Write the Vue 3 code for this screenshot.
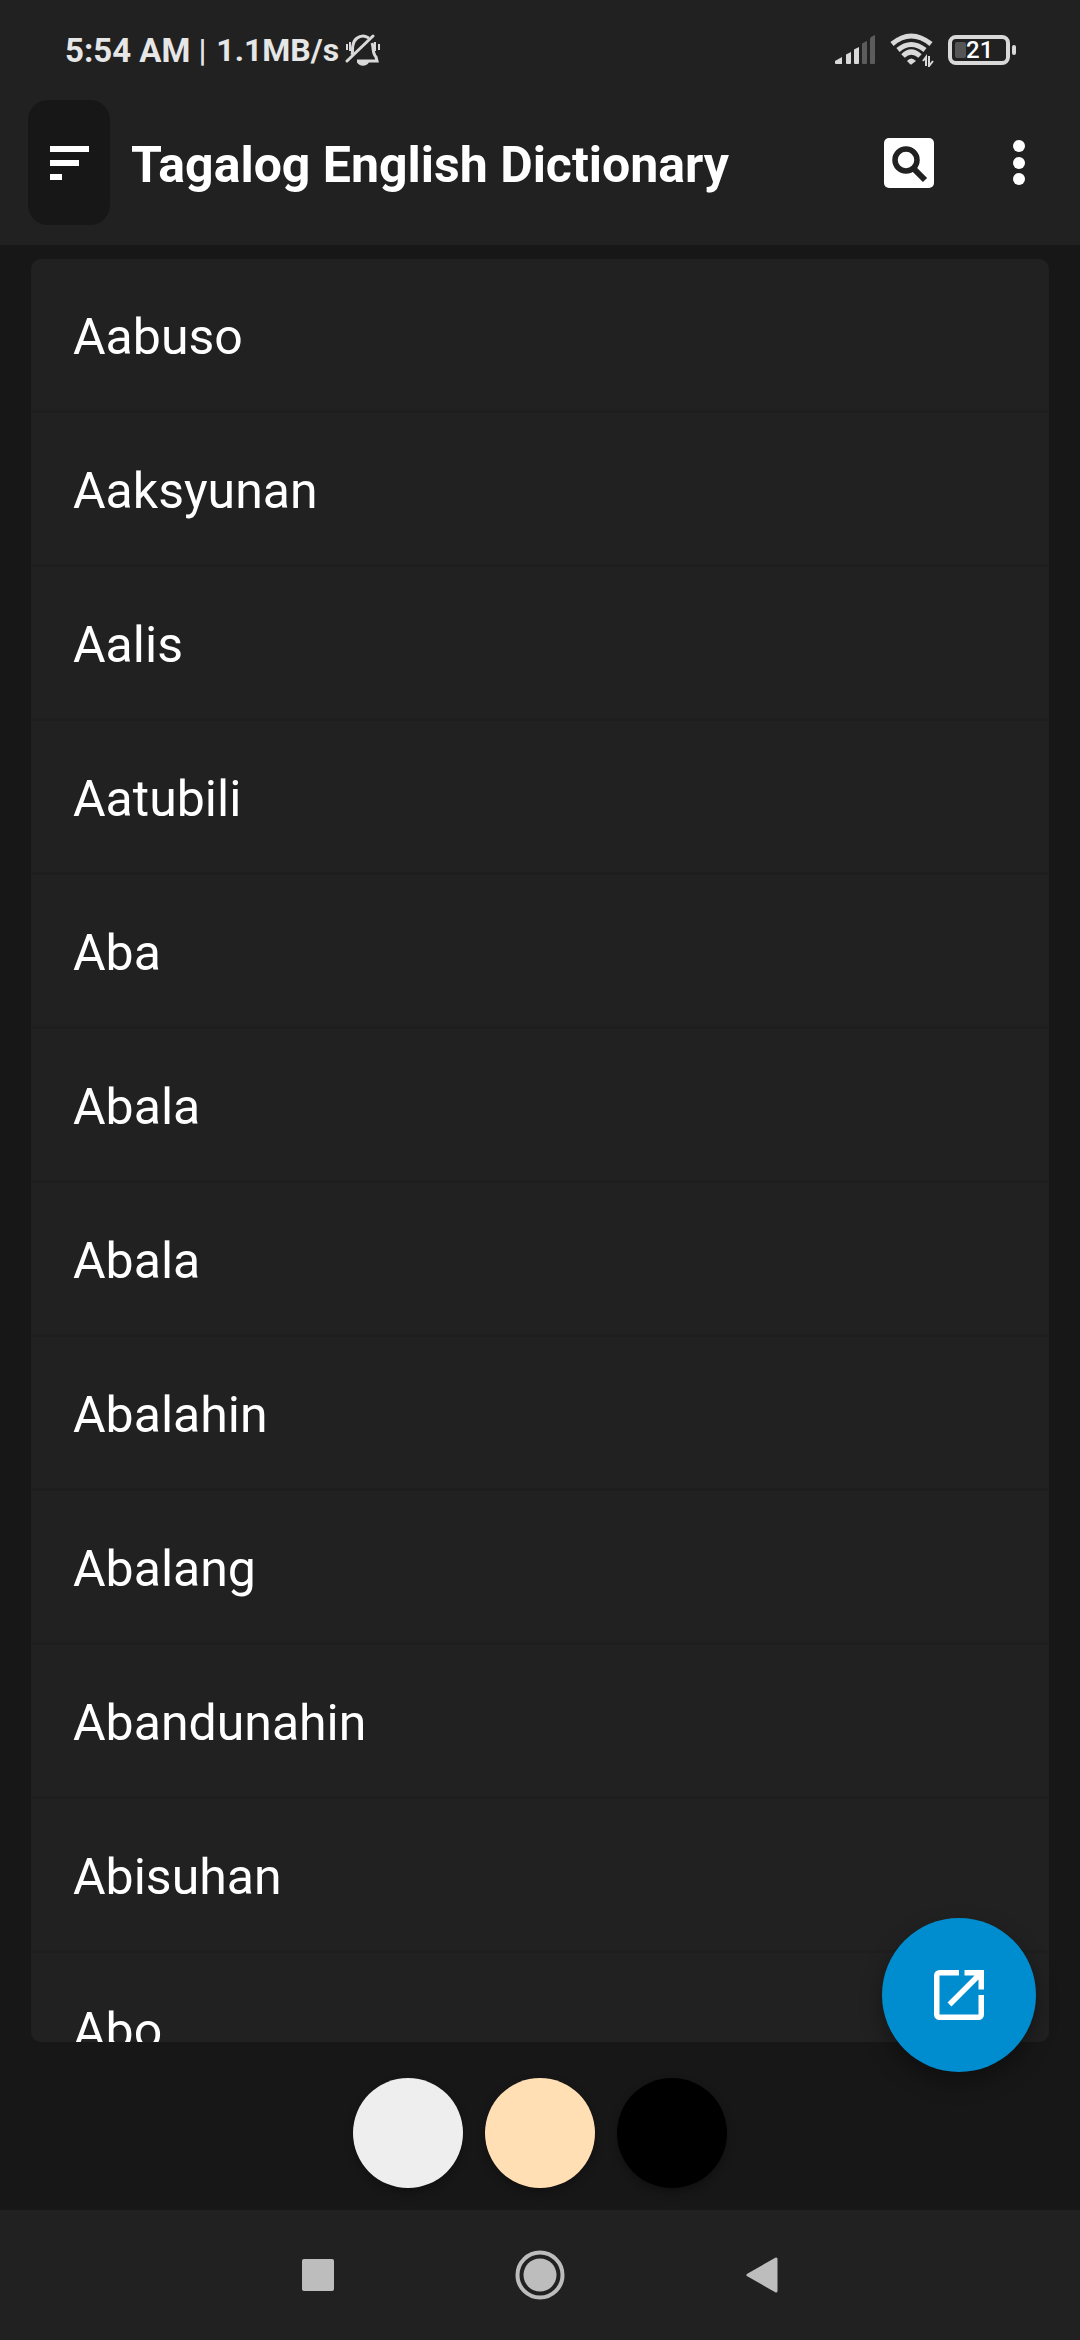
<script setup>
const words = [
  'Aabuso',
  'Aaksyunan',
  'Aalis',
  'Aatubili',
  'Aba',
  'Abala',
  'Abala',
  'Abalahin',
  'Abalang',
  'Abandunahin',
  'Abisuhan',
  'Abo',
]

const themes = [
  { id: 'light', label: 'Light theme' },
  { id: 'sepia', label: 'Sepia theme' },
  { id: 'dark', label: 'Dark theme' },
]
</script>

<template>
  <div class="screen">
    <header class="top">
      <div class="status">
        <span class="clock">5:54 AM</span>
        <span class="divider">|</span>
        <span class="speed">1.1MB/s</span>
        <svg class="bell" width="36" height="34" viewBox="0 0 36 34" fill="none" stroke="#d9d9d9" stroke-width="3">
          <path d="M7 22c1-3 0-7 1-10 1-6 6-9 10-9 2 0 4 1 6 2M27 10c2 5 0 10 4 14l1 4H12" />
          <path d="M12 29h12c-2 5-10 5-12 0z" fill="#d9d9d9" stroke="none" />
          <path d="M2 28 28 3" stroke-linecap="round" />
          <path d="M2 11v6M5 9v9M30 9v9M34 11v6" stroke-width="2" />
        </svg>
        <span class="spacer"></span>
        <svg class="signal" width="42" height="30" viewBox="0 0 42 30">
          <g fill="#d9d9d9">
            <path d="M1 26 8 22v7H2a1 1 0 0 1-1-1z" />
            <path d="M12 20q0-1 1-1l4-2v11q0 1-1 1h-3q-1 0-1-1z" />
            <path d="M20 15q0-1 1-1l4-2v16q0 1-1 1h-3q-1 0-1-1z" />
          </g>
          <g fill="#5c5c5c">
            <path d="M28 9q0-1 1-1l4-2v22q0 1-1 1h-3q-1 0-1-1z" />
            <path d="M36 4q0-1 1-2l4-2v28q0 1-1 1h-3q-1 0-1-1z" />
          </g>
        </svg>
        <svg class="wifi" width="44" height="34" viewBox="0 0 44 34" fill="none" stroke="#d9d9d9" stroke-width="5">
          <path d="M2 11Q21-5 41 11" />
          <path d="M8 17Q21 6 35 17" />
          <path d="M13 23Q21 15 30 23" />
          <path d="M17 28q4-5 9 0l-4 3q-1 1-2 0z" fill="#d9d9d9" stroke="none" />
          <path d="M36 33V24l-3 4M39 23v10l4-5" stroke-width="2" />
        </svg>
        <span class="battery"><span class="cell"><i class="charge"></i>21</span><i class="tip"></i></span>
      </div>

      <div class="toolbar">
        <button class="menu" type="button" aria-label="Menu">
          <svg width="39" height="34" viewBox="0 0 39 34" fill="#fff">
            <path d="M0 0h39v6H0zM0 14h29v6H0zM0 28h12v6H0z" />
          </svg>
        </button>
        <h1>Tagalog English Dictionary</h1>
        <button class="search" type="button" aria-label="Search">
          <svg width="50" height="50" viewBox="0 0 50 50">
            <rect width="50" height="50" rx="5" fill="#fff" />
            <g fill="none" stroke="#212121">
              <circle cx="22" cy="22" r="11" stroke-width="5.5" />
              <path d="m29 30 12 12" stroke-width="6" />
            </g>
          </svg>
        </button>
        <button class="more" type="button" aria-label="More options">
          <svg width="12" height="46" viewBox="0 0 12 46" fill="#fff">
            <circle cx="6" cy="6" r="6" />
            <circle cx="6" cy="23" r="6" />
            <circle cx="6" cy="39" r="6" />
          </svg>
        </button>
      </div>
    </header>

    <main>
      <ul class="words">
        <li v-for="(word, i) in words" :key="i"><a href="#">{{ word }}</a></li>
      </ul>

      <div class="themes">
        <button v-for="t in themes" :key="t.id" type="button" :class="['swatch', t.id]" :aria-label="t.label"></button>
      </div>

      <button class="open" type="button" aria-label="Open">
        <svg width="50" height="50" viewBox="0 0 50 50" fill="none" stroke="#fff" stroke-width="5.5">
          <path d="M25 2.75H5.5a2.75 2.75 0 0 0-2.75 2.75v39a2.75 2.75 0 0 0 2.75 2.75h39a2.75 2.75 0 0 0 2.75-2.75V25" />
          <path d="M30.5 2.75h16.75V19.5M47 3 15.5 34.5" />
        </svg>
      </button>
    </main>

    <nav class="system">
      <button type="button" aria-label="Recent apps">
        <svg width="32" height="32" viewBox="0 0 32 32"><rect width="32" height="32" rx="2" fill="#bdbdbd" /></svg>
      </button>
      <button type="button" aria-label="Home">
        <svg width="50" height="50" viewBox="0 0 50 50">
          <circle cx="25" cy="25" r="22.5" fill="none" stroke="#bdbdbd" stroke-width="4" />
          <circle cx="25" cy="25" r="16.5" fill="#bdbdbd" />
        </svg>
      </button>
      <button type="button" aria-label="Back">
        <svg width="32" height="36" viewBox="0 0 32 36">
          <path d="M2 18 30 2v32z" fill="#bdbdbd" stroke="#bdbdbd" stroke-width="3" stroke-linejoin="round" />
        </svg>
      </button>
    </nav>
  </div>
</template>

<style>
body {
  background: #171717;
}
</style>

<style scoped>
* {
  box-sizing: border-box;
}

.screen {
  display: flex;
  flex-direction: column;
  height: 100vh;
  background: #171717;
  color: #fff;
  font-family: Roboto, "Noto Sans", sans-serif;
}

button {
  display: flex;
  align-items: center;
  justify-content: center;
  padding: 0;
  border: 0;
  background: none;
  cursor: pointer;
}

svg {
  display: block;
  flex: none;
}

.top {
  flex: none;
  padding-bottom: 20px;
  background: #212121;
}

.status {
  display: flex;
  align-items: center;
  height: 100px;
  padding: 0 64px 0 65px;
  color: #e6e6e6;
  font-size: 33px;
  font-weight: 700;
}

.divider {
  margin: 0 10px 0 8px;
  font-size: 32px;
  font-weight: 500;
}

.speed {
  font-size: 32px;
}

.bell {
  margin-left: 6px;
}

.spacer {
  flex: 1;
}

.wifi {
  margin-left: 14px;
}

.battery {
  display: flex;
  align-items: center;
  gap: 2px;
  margin-left: 14px;
}

.cell {
  display: flex;
  align-items: center;
  width: 62px;
  height: 30px;
  padding-left: 3px;
  border: 4px solid #d9d9d9;
  border-radius: 8px;
  color: #fff;
  font-size: 24px;
  font-weight: 500;
}

.charge {
  width: 11px;
  height: 16px;
  border-radius: 2px;
  background: #555;
}

.tip {
  width: 4px;
  height: 10px;
  border-radius: 2px;
  background: #d9d9d9;
}

.toolbar {
  display: flex;
  align-items: center;
  padding: 0 34px 0 28px;
}

.menu {
  width: 82px;
  height: 125px;
  border-radius: 20px;
  background: #171717;
}

h1 {
  flex: 1;
  margin: 4px 0 0 21px;
  font-size: 50px;
  font-weight: 700;
  line-height: 58px;
  white-space: nowrap;
}

.search {
  width: 84px;
  height: 84px;
}

.more {
  width: 54px;
  height: 84px;
  margin-left: 41px;
}

main {
  position: relative;
  display: flex;
  flex: 1;
  flex-direction: column;
  min-height: 0;
  padding-top: 14px;
}

.words {
  flex: 1;
  min-height: 0;
  margin: 0 31px;
  padding: 0;
  overflow-y: auto;
  border-radius: 10px;
  background: #212121;
  list-style: none;
  scrollbar-width: none;
}

.words li {
  border-bottom: 3px solid #1e1e1e;
}

.words a {
  display: block;
  padding: 49px 42px 44px;
  color: #fff;
  font-size: 50px;
  line-height: 58px;
  text-decoration: none;
}

.themes {
  display: flex;
  flex: none;
  justify-content: center;
  gap: 22px;
  padding: 36px 0 22px;
}

.swatch {
  width: 110px;
  height: 110px;
  border-radius: 50%;
  box-shadow: 0 4px 10px rgba(0, 0, 0, 0.3);
}

.light {
  background: #eee;
}

.sepia {
  background: #ffdfb3;
}

.dark {
  background: #000;
}

.open {
  position: absolute;
  right: 44px;
  bottom: 138px;
  width: 154px;
  height: 154px;
  border-radius: 50%;
  background: #008dcf;
  box-shadow: 0 10px 22px rgba(0, 0, 0, 0.35);
}

.system {
  display: flex;
  flex: none;
  align-items: center;
  justify-content: center;
  gap: 140px;
  height: 130px;
  background: #212121;
}

.system button {
  width: 82px;
  height: 82px;
}
</style>
